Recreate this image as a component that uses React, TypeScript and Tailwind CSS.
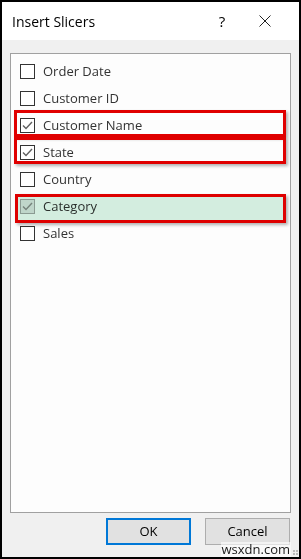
import React from 'react';

interface Field {
  name: string;
  checked: boolean;
  disabled?: boolean;
}

const fields: Field[] = [
  { name: 'Order Date', checked: false },
  { name: 'Customer ID', checked: false },
  { name: 'Customer Name', checked: true },
  { name: 'State', checked: true },
  { name: 'Country', checked: false },
  { name: 'Category', checked: true, disabled: true },
  { name: 'Sales', checked: false },
];

const CheckBox: React.FC<{ checked: boolean; disabled?: boolean }> = ({ checked, disabled }) => (
  <div
    className={
      disabled
        ? 'w-[15px] h-[15px] border border-[#a5a5a5] bg-[#e5e5e5] flex items-center justify-center'
        : 'w-[15px] h-[15px] border border-[#333333] bg-white flex items-center justify-center'
    }
  >
    {checked && (
      <svg width="11" height="9" viewBox="0 0 11 9" fill="none">
        <path d="M1 4.5 L4 7.5 L10 1" stroke={disabled ? '#8c8c8c' : '#606060'} strokeWidth="1.4" />
      </svg>
    )}
  </div>
);

const App: React.FC = () => {
  return (
    <div
      className="relative w-[301px] h-[559px] border-2 border-black bg-[#f0f0f0] flex flex-col overflow-hidden"
      style={{ fontFamily: '"Open Sans", "Noto Sans", sans-serif' }}
    >
      {/* title bar */}
      <div className="h-[38px] bg-white flex items-center pl-[10px] text-[14px] text-black">
        <span className="flex-1">Insert Slicers</span>
        <span className="w-[18px] text-center text-[15px]">?</span>
        <div className="w-[68px] flex justify-center">
          <svg width="12" height="12" viewBox="0 0 12 12">
            <path d="M0.5 0.5 L11.5 11.5 M11.5 0.5 L0.5 11.5" stroke="#222" strokeWidth="1" />
          </svg>
        </div>
      </div>

      {/* field list */}
      <div className="ml-[8px] mt-[13px] w-[281px] h-[460px] border border-[#a0a0a0] bg-[#fdfdfd] pt-[4px] pl-[9px]">
        {fields.map((f) => (
          <div key={f.name} className="h-[27px] flex items-center gap-[8px]">
            <CheckBox checked={f.checked} disabled={f.disabled} />
            <span className="text-[13px] text-[#333]">{f.name}</span>
          </div>
        ))}
      </div>

      {/* buttons */}
      <div className="flex gap-[14px] pl-[104px] mt-[5px]">
        <button className="w-[85px] h-[27px] border-2 border-[#0078d7] bg-[#e1e1e1] text-[13px] text-black">OK</button>
        <button className="w-[85px] h-[27px] border border-[#adadad] bg-[#e1e1e1] text-[13px] text-black">Cancel</button>
      </div>

      {/* red highlight boxes */}
      <div className="absolute left-[12px] top-[108px] w-[272px] h-[27px] border-[3px] border-[#e00000] shadow-[2px_2px_3px_rgba(0,0,0,0.3)]" />
      <div className="absolute left-[12px] top-[135px] w-[272px] h-[27px] border-[3px] border-[#e00000] shadow-[2px_2px_3px_rgba(0,0,0,0.3)]" />
      <div className="absolute left-[13px] top-[192px] w-[271px] h-[29px] border-[3px] border-[#e00000] bg-[#d5efe1] mix-blend-multiply shadow-[2px_2px_3px_rgba(0,0,0,0.3)]" />

      {/* watermark */}
      <div className="absolute right-[8px] bottom-[0px] text-[13px] leading-[15px] text-[#1a1a1a] bg-white/60 px-[1px]">
        wsxdn.com
      </div>
      <div className="absolute right-[1px] bottom-[2px] grid grid-cols-2 gap-[1px]">
        <span className="w-[2px] h-[2px] bg-[#bbb]" />
        <span className="w-[2px] h-[2px] bg-[#bbb]" />
        <span className="w-[2px] h-[2px] bg-[#bbb]" />
        <span className="w-[2px] h-[2px] bg-[#bbb]" />
      </div>
    </div>
  );
};

export default App;
